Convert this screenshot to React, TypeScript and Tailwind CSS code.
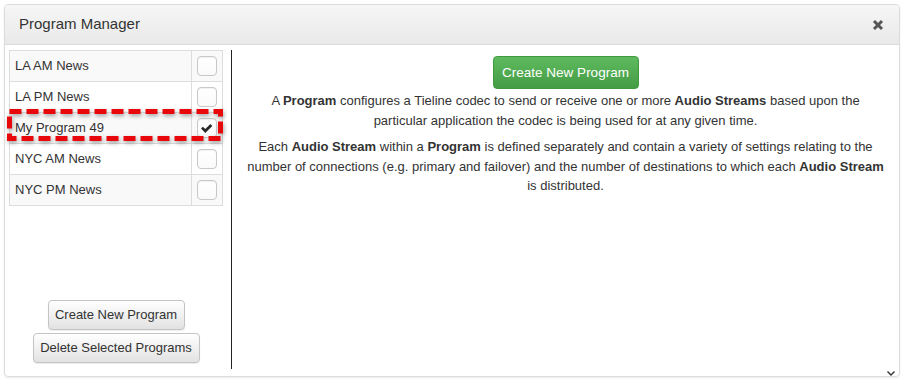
import React from "react";

const rows = [
  { name: "LA AM News", checked: false },
  { name: "LA PM News", checked: false },
  { name: "My Program 49", checked: true },
  { name: "NYC AM News", checked: false },
  { name: "NYC PM News", checked: false },
];

function Checkbox({ checked }: { checked: boolean }) {
  return (
    <div className="w-[20px] h-[20px] rounded-[4px] border border-[#c8c8c8] bg-gradient-to-b from-white to-[#fafafa] shadow-[inset_0_1px_1px_rgba(0,0,0,0.06)] flex items-center justify-center">
      {checked && (
        <svg width="12" height="9" viewBox="0 0 12 9">
          <path d="M0 4.6 L1.9 2.7 L4.3 5.1 L9.4 0 L11.3 1.9 L4.3 8.9 Z" fill="#2a2a2a" />
        </svg>
      )}
    </div>
  );
}

function GrayButton({ children, w }: { children: React.ReactNode; w: string }) {
  return (
    <button className={`${w} h-[30px] px-0 rounded-[4px] border border-[#c4c4c4] bg-gradient-to-b from-white to-[#e2e2e2] text-[13px] text-[#333] shadow-[0_1px_1px_rgba(0,0,0,0.08)]`}>
      {children}
    </button>
  );
}

export default function App() {
  return (
    <div className="w-[903px] h-[380px] bg-white pt-[4px] pl-[4px] relative" style={{ fontFamily: '"Liberation Sans", Arial, sans-serif' }}>
      <div className="w-[896px] h-[373px] border border-[#dcdcdc] rounded-[4px] shadow-[0_1px_2px_rgba(0,0,0,0.08)] flex flex-col overflow-hidden">
        <div className="h-[40px] shrink-0 flex items-center justify-between pl-[14px] pr-[15px] bg-gradient-to-b from-[#f6f6f6] to-[#e9e9e9] border-b border-[#dadada]">
          <span className="text-[15px] text-[#333]">Program Manager</span>
          <svg width="12" height="12" viewBox="0 0 12 12">
            <path d="M2 2 L10 10 M10 2 L2 10" stroke="#555" strokeWidth="3" strokeLinecap="butt" />
          </svg>
        </div>
        <div className="flex pt-[5px] pl-[4px] flex-1">
          <div className="w-[214px] h-[319px] flex flex-col justify-between relative">
            <div className="border-t border-l border-r border-[#ddd]">
              {rows.map((r, i) => (
                <div key={r.name} className={`flex h-[31px] border-b border-[#ddd] ${i % 2 === 0 ? "bg-[#f9f9f9]" : "bg-white"}`}>
                  <div className="flex-1 flex items-center pl-[5px] text-[13px] text-[#333]">{r.name}</div>
                  <div className="w-[31px] border-l border-[#ddd] flex items-center justify-center">
                    <Checkbox checked={r.checked} />
                  </div>
                </div>
              ))}
            </div>
            <svg className="absolute left-[-2px] top-[59px] drop-shadow-[1px_2px_2px_rgba(0,0,0,0.35)]" width="216" height="33" viewBox="0 0 216 33">
              <rect x="2.5" y="2.5" width="211" height="27" fill="none" stroke="#e8080b" strokeWidth="5" strokeDasharray="12 5" />
            </svg>
            <div className="flex flex-col items-center gap-[3px] pb-[6px]">
              <GrayButton w="w-[137px]">Create New Program</GrayButton>
              <GrayButton w="w-[167px]">Delete Selected Programs</GrayButton>
            </div>
          </div>
          <div className="w-[1px] h-[319px] bg-[#222] ml-[8px]" />
          <div className="flex-1 flex flex-col items-center pt-[6px] text-[13px] text-[#333] leading-[19.5px] text-center">
            <button className="h-[33px] w-[146px] rounded-[4px] border border-[#3f9a3f] bg-gradient-to-b from-[#5fba5f] to-[#449c44] text-white text-[13.5px]">
              Create New Program
            </button>
            <p className="mt-[2px]">
              A <b>Program</b> configures a Tieline codec to send or receive one or more <b>Audio Streams</b> based upon the
              <br />
              particular application the codec is being used for at any given time.
            </p>
            <p className="mt-[7px]">
              Each <b>Audio Stream</b> within a <b>Program</b> is defined separately and contain a variety of settings relating to the
              <br />
              number of connections (e.g. primary and failover) and the number of destinations to which each <b>Audio Stream</b>
              <br />
              is distributed.
            </p>
          </div>
        </div>
      </div>
      <svg className="absolute left-[887px] top-[371px]" width="8" height="5" viewBox="0 0 8 5">
        <path d="M0.5 0.5 L4 4 L7.5 0.5" fill="none" stroke="#333" strokeWidth="1.4" />
      </svg>
    </div>
  );
}
